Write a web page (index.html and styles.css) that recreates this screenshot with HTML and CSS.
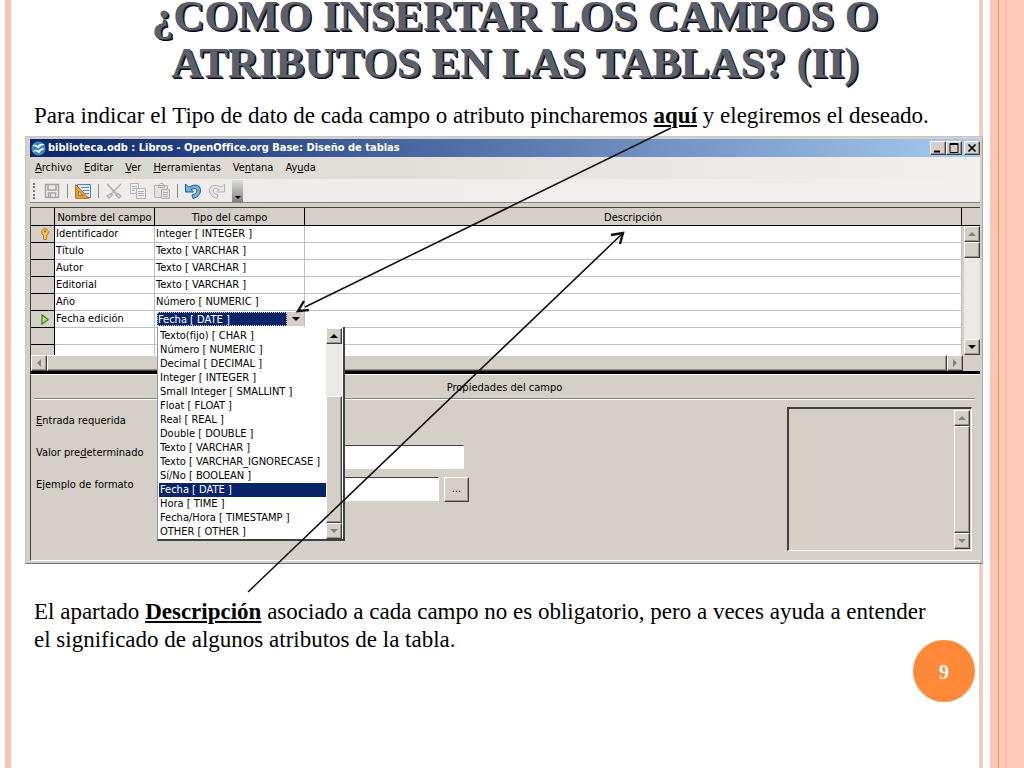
FILE: index.html
```html
<!DOCTYPE html>
<html lang="es">
<head>
    <meta charset="UTF-8">
    <meta name="viewport" content="width=device-width, initial-scale=1.0">
    <title>¿Como insertar los campos o atributos en las tablas? (II)</title>
    <link rel="stylesheet" href="styles.css">
</head>
<body>
    <main class="slide">
        <h1>¿COMO INSERTAR LOS CAMPOS O<br>ATRIBUTOS EN LAS TABLAS? (II)</h1>
        <p class="text">Para indicar el Tipo de dato de cada campo o atributo pincharemos <b>aquí</b> y elegiremos el deseado.</p>

        <div class="window">
            <div class="titlebar">
                <svg class="logo" viewBox="0 0 16 16">
                    <circle cx="8" cy="8" r="7.5" fill="#3f86c0"/>
                    <path d="M1 5.500q3-3 6 0q3-4 8-1.500q-5 0-7 4q-3-3-7-2.500zM1.500 11.500q3-3.500 6-1q3-4 7-2q-4 1-6 4.500q-3-3-7-1.500z" fill="#fff"/>
                </svg>
                <span class="title">biblioteca.odb : Libros - OpenOffice.org Base: Diseño de tablas</span>
                <button class="bevel win-btn" aria-label="Minimizar"><svg viewBox="0 0 12 10"><path d="M2 8.500h6" stroke="#000" stroke-width="2"/></svg></button>
                <button class="bevel win-btn" aria-label="Maximizar"><svg viewBox="0 0 12 10"><path d="M2 .5h8v9H2zM2 1.500h8" fill="none" stroke="#000"/></svg></button>
                <button class="bevel win-btn close" aria-label="Cerrar"><svg viewBox="0 0 12 10"><path d="M2.500 1.500l7 7M9.500 1.500l-7 7" stroke="#000" stroke-width="1.700"/></svg></button>
            </div>

            <nav class="menubar">
                <span><u>A</u>rchivo</span>
                <span><u>E</u>ditar</span>
                <span><u>V</u>er</span>
                <span><u>H</u>erramientas</span>
                <span>Ve<u>n</u>tana</span>
                <span>Ay<u>u</u>da</span>
            </nav>

            <div class="toolbar">
                <span class="grip"></span>
                <button class="tool" aria-label="Guardar">
                    <svg viewBox="0 0 16 16" fill="none" stroke="#a5a5a5" stroke-width="1.500"><path d="M1.500 1.500h13v13h-13zM4 2v5h8V2M4.500 14v-4h7v4M6.500 11v3"/></svg>
                </button>
                <span class="sep"></span>
                <button class="tool" aria-label="Modo de diseño">
                    <svg viewBox="0 0 16 16"><path d="M2.500 1.500h13v13h-13z" fill="#dcebf8" stroke="#5f7fa5"/><path d="M6 4.500h8M8 7.500h6M10 10.500h4" stroke="#5f8fc0"/><path d="M.7 1.500v13.800h13zM3.500 8v4.500H8z" fill="#f2a52c" stroke="#a86410" fill-rule="evenodd"/></svg>
                </button>
                <span class="sep"></span>
                <button class="tool" aria-label="Cortar">
                    <svg viewBox="0 0 16 16" fill="none" stroke="#b2b2b2" stroke-width="1.500"><path d="M1 1l11 11M15 1L4 12M1.500 1l9 11"/><path d="M4 11l-3 2 2 2 3-3zM12 11l3 2-2 2-3-3z"/></svg>
                </button>
                <button class="tool" aria-label="Copiar">
                    <svg viewBox="0 0 16 16" fill="#eee" stroke="#b2b2b2"><path d="M.5.5h8v10h-8zM2 3.500h5M2 5.500h5M2 7.500h3"/><path d="M6.500 5.500h9v10h-9zM8 8.500h6M8 10.500h6M8 12.500h6"/></svg>
                </button>
                <button class="tool" aria-label="Pegar">
                    <svg viewBox="0 0 16 16" fill="#e2e2e2" stroke="#b2b2b2"><path d="M.5 2.500h13v12H.5zM4.500 4.500v-2L6 .5h3l1.500 2v2z"/><path d="M7.500 6.500h8v9h-8zM9 9.500h5M9 11.500h5M9 13.500h5"/></svg>
                </button>
                <span class="sep"></span>
                <button class="tool" aria-label="Deshacer">
                    <svg viewBox="0 0 16 16"><path d="M.5 1v8h8L6 6.500Q11.500 4 12 8q0 3-5 4l1 3.500q7.500-2 7.500-8.500Q15-1 3.500 4z" fill="#6fb1de" stroke="#1f5f98"/></svg>
                </button>
                <button class="tool" aria-label="Restaurar">
                    <svg viewBox="0 0 16 16"><path d="M15.500 1v8h-8L10 6.500Q4.500 4 4 8q0 3 5 4l-1 3.500Q.5 13.500.5 7 1-1 12.500 4z" fill="#e6e6e6" stroke="#b4b4b4"/></svg>
                </button>
                <button class="overflow" aria-label="Más"><i class="tri down"></i></button>
            </div>

            <div class="grid">
                <table>
                    <thead>
                        <tr><th class="mark"></th><th class="name">Nombre del campo</th><th class="type">Tipo del campo</th><th>Descripción</th></tr>
                    </thead>
                    <tbody>
                        <tr>
                            <td class="mark"><svg class="key" viewBox="0 0 10 12"><path d="M5 .7a3.500 3.500 0 0 0-1.500 6.500v4l1.500.6 2-1-1-1 1-1-.5-1.500A3.500 3.500 0 0 0 5 .7z" fill="#f8ca5c" stroke="#b0700c"/><circle cx="5" cy="3.500" r="1" fill="#8c5200"/></svg></td>
                            <td>Identificador</td><td>Integer [ INTEGER ]</td><td></td>
                        </tr>
                        <tr><td class="mark"></td><td>Título</td><td>Texto [ VARCHAR ]</td><td></td></tr>
                        <tr><td class="mark"></td><td>Autor</td><td>Texto [ VARCHAR ]</td><td></td></tr>
                        <tr><td class="mark"></td><td>Editorial</td><td>Texto [ VARCHAR ]</td><td></td></tr>
                        <tr><td class="mark"></td><td>Año</td><td>Número [ NUMERIC ]</td><td></td></tr>
                        <tr>
                            <td class="mark"><svg class="key" viewBox="0 0 10 12"><path d="M2 2l6 4.500L2 11z" fill="#b9f07c" stroke="#2f8a12" stroke-width="1.300"/></svg></td>
                            <td>Fecha edición</td>
                            <td class="combo">
                                <div class="combo-box">
                                    <select aria-label="Tipo del campo"><option>Fecha [ DATE ]</option></select>
                                    <span class="combo-arrow"><i class="tri down"></i></span>
                                </div>
                                <div class="dropdown">
                                    <ul>
                                        <li>Texto(fijo) [ CHAR ]</li>
                                        <li>Número [ NUMERIC ]</li>
                                        <li>Decimal [ DECIMAL ]</li>
                                        <li>Integer [ INTEGER ]</li>
                                        <li>Small Integer [ SMALLINT ]</li>
                                        <li>Float [ FLOAT ]</li>
                                        <li>Real [ REAL ]</li>
                                        <li>Double [ DOUBLE ]</li>
                                        <li>Texto [ VARCHAR ]</li>
                                        <li>Texto [ VARCHAR_IGNORECASE ]</li>
                                        <li>Sí/No [ BOOLEAN ]</li>
                                        <li class="selected">Fecha [ DATE ]</li>
                                        <li>Hora [ TIME ]</li>
                                        <li>Fecha/Hora [ TIMESTAMP ]</li>
                                        <li>OTHER [ OTHER ]</li>
                                    </ul>
                                    <div class="vscroll">
                                        <button class="bevel" aria-label="Subir"><i class="tri up"></i></button>
                                        <span class="track"></span>
                                        <span class="bevel thumb list-thumb"></span>
                                        <button class="bevel" aria-label="Bajar"><i class="tri down dim"></i></button>
                                    </div>
                                </div>
                            </td>
                            <td></td>
                        </tr>
                        <tr><td class="mark"></td><td></td><td></td><td></td></tr>
                        <tr class="cut"><td class="mark"></td><td></td><td></td><td></td></tr>
                    </tbody>
                </table>
                <div class="grid-side">
                    <div class="side-head"></div>
                    <div class="vscroll">
                        <button class="bevel" aria-label="Subir"><i class="tri up dim"></i></button>
                        <span class="bevel thumb grid-thumb"></span>
                        <span class="track"></span>
                        <button class="bevel" aria-label="Bajar"><i class="tri down"></i></button>
                    </div>
                </div>
            </div>
            <div class="hscroll">
                <button class="bevel" aria-label="Izquierda"><i class="tri left dim"></i></button>
                <span class="bevel hthumb"></span>
                <button class="bevel" aria-label="Derecha"><i class="tri right dim"></i></button>
            </div>

            <section class="props">
                <h2>Propiedades del campo</h2>
                <div class="props-body">
                    <div class="fields">
                        <div class="field"><label for="req"><u>E</u>ntrada requerida</label><select id="req" class="inset"><option>No</option></select></div>
                        <div class="field"><label for="def">Valor pre<u>d</u>eterminado</label><input id="def" class="inset wide" type="text"></div>
                        <div class="field"><label for="fmt">Ejemplo de formato</label><input id="fmt" class="inset" type="text"><button class="bevel more">...</button></div>
                    </div>
                    <div class="help">
                        <div class="vscroll">
                            <button class="bevel" aria-label="Subir"><i class="tri up dim"></i></button>
                            <span class="bevel thumb"></span>
                            <button class="bevel" aria-label="Bajar"><i class="tri down dim"></i></button>
                        </div>
                    </div>
                </div>
            </section>
        </div>

        <p class="text note">El apartado <b>Descripción</b> asociado a cada campo no es obligatorio, pero a veces ayuda a entender el significado de algunos atributos de la tabla.</p>

        <!-- flechas sobre la ventana -->
        <svg class="arrows" width="1024" height="768" viewBox="0 0 1024 768">
            <path d="M671 128L305 307M248 592L622 234"/>
            <path class="head" d="M304 301L298 311L309 310M611 235L623 233L620 244"/>
        </svg>
        <div class="page-number">9</div>
    </main>
</body>
</html>
```
FILE: styles.css
```css
body {
    margin: 0;
    background: #fff;
    color: #000;
}
.slide {
    position: relative;
    min-height: 768px;
    box-sizing: border-box;
    padding: 0 41px 0 25px;
    overflow: hidden;
    background:
        linear-gradient(#f4c5b6, #f4c5b6) 5px 0 / 6px 100% no-repeat,
        linear-gradient(to right, #f0cdc3 4px, #fff 4px, #fff 11px, #fdc5b2 11px, #fdc5b2 19px, #dc9768 19px, #dc9768 20px, #ffcaae 20px, #ffcaae 26px, #f9bda9 26px, #f9bda9 28px, #ffc9b8 28px) right 0 / 45px 100% no-repeat;
}
h1 {
    margin: -8px 0 0;
    padding-left: 22px;
    text-align: center;
    white-space: nowrap;
    font: bold 43px/47px "Liberation Serif", serif;
    color: #5a5f6c;
    text-shadow: 1px 1px #333843, 2px 2px #000;
}
.text {
    margin: 16px 48px 6px 9px;
    font: 23px/28px "Liberation Serif", serif;
}
.text b {
    text-decoration: underline;
}
.note {
    margin-top: 34px;
}

/* ventana */
.window {
    box-sizing: border-box;
    padding: 2px 2px 2px 4px;
    border: 1px solid #c8c7c2;
    border-right-color: #aaa;
    border-bottom-color: #777;
    background: #d4d0c8;
    font: 11px/14px "DejaVu Sans Condensed", "DejaVu Sans", sans-serif;
}
.window button,
.window input,
.window select {
    box-sizing: border-box;
    margin: 0;
    padding: 0;
    border-radius: 0;
    font: inherit;
    color: #000;
}
.window u {
    text-underline-offset: 1px;
}
.titlebar {
    display: flex;
    align-items: center;
    height: 18px;
    padding: 0 0 0 1px;
    background: linear-gradient(to right, #0a246a, #a6caf0);
    color: #fff;
    font-weight: bold;
}
.logo {
    width: 15px;
    height: 15px;
    margin-right: 2px;
}
.title {
    flex: 1;
}
.bevel {
    box-sizing: border-box;
    display: flex;
    align-items: center;
    justify-content: center;
    background: #d4d0c8;
    border: 1px solid;
    border-color: #fff #404040 #404040 #fff;
    box-shadow: inset -1px -1px #999690;
}
.win-btn {
    width: 16px;
    height: 14px;
}
.win-btn svg {
    width: 12px;
    height: 10px;
}
.window .close {
    margin-left: 2px;
}
.menubar {
    display: flex;
    align-items: center;
    gap: 12px;
    height: 22px;
    padding-left: 5px;
    background: linear-gradient(to right, #d8d5ce, #f2f0ef);
}
.toolbar {
    display: flex;
    align-items: center;
    height: 23px;
    padding-left: 3px;
    background: linear-gradient(to right, #eeecea, #f2f0ef);
    border-bottom: 1px solid #85837e;
}
.tool {
    width: 24px;
    height: 20px;
    background: none;
    border: 0;
}
.tool svg {
    display: block;
    width: 16px;
    height: 16px;
    margin: 0 auto;
}
.grip {
    width: 0;
    height: 16px;
    margin-right: 5px;
    border-left: 2px dotted #777;
}
.sep {
    width: 1px;
    height: 14px;
    margin: 0 3px;
    background: #8e8c88;
}
.window .overflow {
    display: flex;
    align-items: flex-end;
    justify-content: center;
    width: 11px;
    height: 22px;
    margin-left: 3px;
    padding-bottom: 3px;
    border: 0;
    background: linear-gradient(#dedede, #808080);
}

/* triangulos */
.tri {
    border: 4px solid transparent;
}
.up {
    border-top: 0;
    border-bottom-color: #000;
}
.down {
    border-bottom: 0;
    border-top-color: #000;
}
.left {
    border-left: 0;
    border-right-color: #000;
}
.right {
    border-right: 0;
    border-left-color: #000;
}
.up.dim { border-bottom-color: #84817c; }
.down.dim { border-top-color: #84817c; }
.left.dim { border-right-color: #84817c; }
.right.dim { border-left-color: #84817c; }
.overflow .tri {
    border-width: 3px 3px 0;
}

/* tabla */
.grid {
    display: flex;
    margin-top: 4px;
    border-top: 1px solid #404040;
    border-left: 1px solid #404040;
}
table {
    flex: 1;
    table-layout: fixed;
    border-collapse: separate;
    border-spacing: 0;
    background: #fff;
}
th,
td {
    box-sizing: border-box;
    height: 17px;
    padding: 0 1px;
    border-right: 1px solid #c0c0c0;
    border-bottom: 1px solid #c0c0c0;
    text-align: left;
    font-weight: normal;
    line-height: 14px;
    white-space: nowrap;
}
th {
    height: 18px;
    padding-top: 2px;
    background: #d4d0c8;
    border-color: #000;
    text-align: center;
}
.mark {
    width: 24px;
    background: #d4d0c8;
    border-color: #000;
}
.name {
    width: 100px;
}
.type {
    width: 150px;
}
.cut td {
    height: 10px;
    border-bottom: 0;
}
.key {
    display: block;
    width: 10px;
    height: 12px;
    margin-left: 8px;
}
.combo {
    position: relative;
    padding: 0 0 0 2px;
}
.combo-box {
    display: flex;
    height: 14px;
}
.combo-box select {
    flex: 1;
    appearance: none;
    background: #0a246a;
    border: 1px dotted #ccd;
    color: #fff;
}
.window .combo-box select {
    color: #fff;
}
.combo-arrow {
    display: flex;
    align-items: center;
    justify-content: center;
    width: 17px;
    background: #d4d0c8;
}
.dropdown {
    position: absolute;
    z-index: 2;
    top: 16px;
    left: 2px;
    display: flex;
    box-sizing: border-box;
    width: 188px;
    padding: 1px 1px 0;
    background: #fff;
    border: 1px solid #404040;
    border-width: 0 2px 2px 1px;
    border-left-color: #999;
}
.dropdown ul {
    flex: 1;
    margin: 0;
    padding: 1px 0 0;
    list-style: none;
}
.dropdown li {
    height: 14px;
    padding-left: 1px;
}
.dropdown .selected {
    background: #0a246a;
    color: #fff;
}

/* barras de desplazamiento */
.vscroll {
    display: flex;
    flex-direction: column;
    width: 16px;
    background: #ebe9e6;
}
.vscroll .bevel {
    width: 16px;
    min-height: 16px;
}
.track {
    flex: 1;
}
.thumb {
    flex: 1;
}
.list-thumb {
    flex: 0 0 127px;
}
.grid-thumb {
    flex: 0 0 16px;
}
.grid-side {
    display: flex;
    flex-direction: column;
    align-items: flex-end;
    width: 18px;
}
.side-head {
    width: 100%;
    height: 17px;
    border-bottom: 1px solid #000;
}
.grid-side .vscroll {
    flex: 1;
}
.hscroll {
    display: flex;
    padding-right: 17px;
    border-left: 1px solid #404040;
    border-bottom: 3px solid #000;
}
.hscroll .bevel {
    width: 16px;
    height: 16px;
}
.hscroll .hthumb {
    flex: 1;
}

/* propiedades */
.props {
    border-top: 1px solid #fff;
    border-left: 1px solid #404040;
    border-bottom: 1px solid #fff;
    padding: 0 5px 9px 3px;
}
.props h2 {
    margin: 0;
    padding: 6px 0 3px;
    border-bottom: 1px solid #85837e;
    box-shadow: 0 1px #fff;
    text-align: center;
    font: inherit;
}
.props-body {
    display: flex;
    justify-content: space-between;
    padding: 8px 3px 0 2px;
}
.fields {
    display: flex;
    flex-direction: column;
    gap: 8px;
    padding-top: 6px;
}
.field {
    display: flex;
    align-items: center;
    height: 24px;
}
.field label {
    width: 124px;
    padding-bottom: 8px;
}
.inset,
.help {
    border: 1px solid;
    border-color: #404040 #fff #fff #404040;
}
.inset {
    width: 279px;
    height: 24px;
    background: #fff;
}
.field select {
    width: 120px;
    appearance: none;
}
.field .wide {
    width: 304px;
}
.window .more {
    width: 25px;
    height: 25px;
    margin-left: 5px;
}
.help {
    display: flex;
    justify-content: flex-end;
    box-sizing: border-box;
    width: 185px;
    height: 144px;
    padding: 1px;
    border-width: 2px 1px 1px 2px;
}

.arrows {
    position: absolute;
    z-index: 3;
    top: 0;
    left: 0;
    fill: none;
    stroke: #111;
    stroke-width: 1.6;
    pointer-events: none;
}
.head {
    stroke-width: 2.4;
}
.page-number {
    position: absolute;
    right: 49px;
    bottom: 66px;
    width: 62px;
    height: 62px;
    border-radius: 50%;
    background: #ff8839;
    color: #fff;
    text-align: center;
    font: bold 20px/64px "Liberation Serif", serif;
}
```
